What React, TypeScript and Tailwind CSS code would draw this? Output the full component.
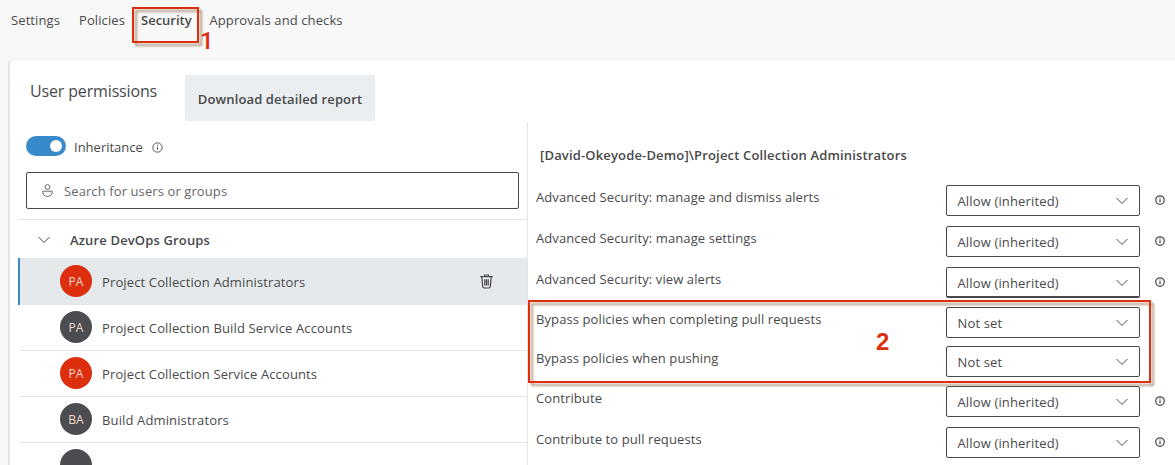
import React from "react";

const INK = "#48494b";

function Chevron() {
  return (
    <svg width="12" height="8" viewBox="0 0 12 8" fill="none" stroke={INK} strokeWidth="1" className="shrink-0">
      <path d="M0.5 1 L6 6.5 L11.5 1" />
    </svg>
  );
}

function Info({ size, stroke }: { size: number; stroke: number }) {
  return (
    <svg width={size} height={size} viewBox="0 0 12 12" fill="none" stroke={INK} strokeWidth={stroke} className="shrink-0">
      <circle cx="6" cy="6" r="5.1" />
      <path d="M6 5.2 V8.8 M6 3.1 V4.2" />
    </svg>
  );
}

function Person() {
  return (
    <svg width="11" height="13" viewBox="0 0 11 13" fill="none" stroke="#66686a" strokeWidth="1" className="shrink-0">
      <circle cx="5.5" cy="3" r="2.4" />
      <path d="M0.8 7.2 H10.2 V8 C10.2 10.8 8.3 12.4 5.5 12.4 C2.7 12.4 0.8 10.8 0.8 8 Z" />
    </svg>
  );
}

function Trash() {
  return (
    <svg width="13" height="15" viewBox="0 0 13 15" fill="none" stroke={INK} strokeWidth="1.2" className="shrink-0">
      <path d="M0.3 2.6 H12.7 M4.5 2.4 V1 H8.5 V2.4 M1.8 2.8 L2.7 12.4 Q2.9 14 4.2 14 H8.8 Q10.1 14 10.3 12.4 L11.2 2.8 M4.8 5.2 V11.4 M6.5 5.2 V11.4 M8.2 5.2 V11.4" />
    </svg>
  );
}

const groups = [
  { initials: "PA", name: "Project Collection Administrators", tone: "bg-[#dd2f0e]", selected: true },
  { initials: "PA", name: "Project Collection Build Service Accounts", tone: "bg-[#4c4d51]" },
  { initials: "PA", name: "Project Collection Service Accounts", tone: "bg-[#dd2f0e]" },
  { initials: "BA", name: "Build Administrators", tone: "bg-[#4c4d51]" },
  { initials: "", name: "", tone: "bg-[#4c4d51]" },
];

const permissions = [
  { label: "Advanced Security: manage and dismiss alerts", value: "Allow (inherited)", height: "h-[41px]" },
  { label: "Advanced Security: manage settings", value: "Allow (inherited)", height: "h-[41px]" },
  { label: "Advanced Security: view alerts", value: "Allow (inherited)", height: "h-[40px]", thick: true },
  { label: "Bypass policies when completing pull requests", value: "Not set", height: "h-[39px]" },
  { label: "Bypass policies when pushing", value: "Not set", height: "h-[40px]" },
  { label: "Contribute", value: "Allow (inherited)", height: "h-[41px]" },
  { label: "Contribute to pull requests", value: "Allow (inherited)", height: "h-[41px]" },
];

export default function App() {
  return (
    <div className="relative flex h-[465px] w-[1175px] flex-col overflow-hidden bg-[#f8f8f8] font-['Open_Sans',sans-serif] text-[13px] leading-[20px] tracking-[0.1px] whitespace-nowrap text-[#48494b]">
      <nav className="flex h-[59px] shrink-0 pt-[10px] pl-[11px]">
        <span className="w-[68px]">Settings</span>
        <span className="w-[62px]">Policies</span>
        <span className="w-[68.5px] font-semibold tracking-[0px]">Security</span>
        <span>Approvals and checks</span>
      </nav>

      <main className="ml-[8px] flex min-h-0 flex-1 flex-col rounded-tl-[5px] border-t border-l-2 border-t-[#eeefef] border-l-[#e1e5e8] bg-white">
        <header className="flex h-[62px] shrink-0 pl-[20px]">
          <h1 className="w-[155px] pt-[19px] text-[16px] leading-[24px] tracking-[-0.15px]">User permissions</h1>
          <button className="mt-[15px] flex h-[46px] w-[190px] items-center justify-center rounded-[2px] bg-[#ebeef0] pt-[2px] font-semibold tracking-[0.13px]">
            Download detailed report
          </button>
        </header>

        <div className="flex min-h-0 flex-1">
          <section className="flex w-[518px] shrink-0 flex-col border-r border-[#e1e5e8] pl-[8px]">
            <div className="flex h-[50px] shrink-0 items-start pt-[14px] pl-[8px]">
              <div className="flex h-[20px] w-[40px] items-center justify-end rounded-full bg-[#388acb] pr-[4px]">
                <div className="size-[12px] rounded-full bg-white" />
              </div>
              <span className="w-[86px] pt-[1px] pl-[8px] tracking-[0px]">Inheritance</span>
              <div className="pt-[6px]">
                <Info size={11} stroke={1} />
              </div>
            </div>
            <div className="ml-[8px] flex h-[37px] w-[493px] shrink-0 items-center rounded-[2px] border border-[#48494b] pl-[15px]">
              <Person />
              <span className="pl-[11px] text-[#66686a]">Search for users or groups</span>
            </div>
            <div className="mt-[10px] flex h-[39px] shrink-0 items-center border-t border-[#e1e5e8] pt-[2px] pl-[20px]">
              <Chevron />
              <span className="pl-[20px] font-semibold tracking-[0.15px]">Azure DevOps Groups</span>
            </div>
            {groups.map((g, i) => (
              <div
                key={i}
                className={
                  g.selected
                    ? "flex h-[47px] shrink-0 border-l-2 border-[#388acb] bg-[#e5e9eb] pt-[7px] pl-[40px]"
                    : "ml-[2px] flex h-[46px] shrink-0 border-b border-[#e1e5e8] pt-[6px] pl-[40px]"
                }
              >
                <div className={`flex size-[32px] shrink-0 items-center justify-center rounded-full pt-px text-[12px] text-[#f3d9d0] ${g.tone}`}>
                  {g.initials}
                </div>
                <span className="w-[388px] pt-[7px] pl-[10px] tracking-[0.13px]">{g.name}</span>
                {g.selected && (
                  <div className="pt-[9px]">
                    <Trash />
                  </div>
                )}
              </div>
            ))}
          </section>

          <section className="flex min-w-0 flex-1 flex-col pl-[8px]">
            <h2 className="h-[63px] shrink-0 pt-[23px] pl-[4px] font-semibold tracking-[0.16px]">
              [David-Okeyode-Demo]\Project Collection Administrators
            </h2>
            {permissions.map((p) => (
              <div key={p.label} className={`flex shrink-0 ${p.height}`}>
                <span className="mt-[2px] w-[410px]">{p.label}</span>
                <div
                  className={`flex h-[31px] w-[194px] shrink-0 items-center justify-between rounded-[2px] border border-[#48494b] pt-px pr-[11px] pl-[10.5px] ${
                    p.thick ? "border-b-2" : ""
                  }`}
                >
                  <span className="tracking-[0.15px]">{p.value}</span>
                  <Chevron />
                </div>
                {p.value !== "Not set" && (
                  <div className="pt-[10px] pl-[15px]">
                    <Info size={10} stroke={1.5} />
                  </div>
                )}
              </div>
            ))}
          </section>
        </div>
      </main>

      <div className="absolute top-[7px] left-[132px] h-[36px] w-[67px] border-2 border-[#dd2f0e] drop-shadow-[3px_3px_1px_rgba(130,90,50,0.6)]" />
      <div className="absolute top-[300px] left-[528px] h-[83px] w-[623px] border-2 border-[#dd2f0e] drop-shadow-[3px_3px_1px_rgba(130,90,50,0.6)]" />
      <span className="absolute top-[27px] left-[200px] font-[Roboto,sans-serif] text-[24px] leading-[28px] font-medium text-[#dd2f0e]">1</span>
      <span className="absolute top-[328px] left-[876px] font-['Liberation_Sans',sans-serif] text-[24px] leading-[28px] font-bold text-[#dd2f0e]">2</span>
    </div>
  );
}
